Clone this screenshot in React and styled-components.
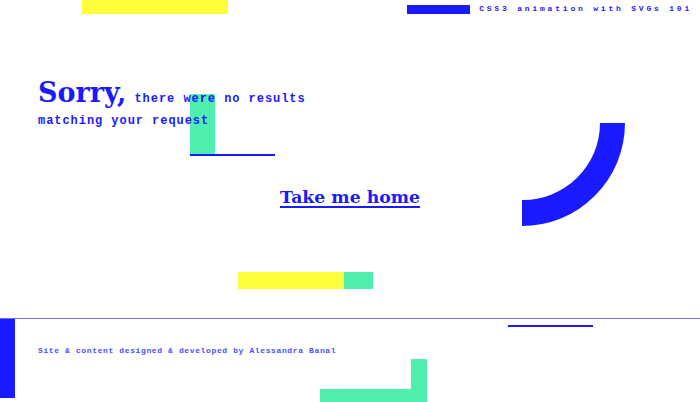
import React from 'react';
import styled, { createGlobalStyle } from 'styled-components';

const BLUE = '#1a1aff';
const GREEN = '#4ff0ad';
const YELLOW = '#fdfd3c';

const GlobalStyle = createGlobalStyle`
  *, *::before, *::after {
    box-sizing: border-box;
  }
  html, body {
    margin: 0;
    padding: 0;
    background: #fff;
  }
`;

const Page = styled.div`
  position: relative;
  width: 700px;
  height: 402px;
  overflow: hidden;
  background: #fff;
  display: flex;
  flex-direction: column;
`;

const Header = styled.header`
  display: flex;
  justify-content: flex-end;
  align-items: center;
  gap: 9px;
  padding: 4px 8px 0 0;
  height: 14px;
`;

const HeaderBar = styled.span`
  width: 63px;
  height: 9px;
  background: ${BLUE};
`;

const HeaderTitle = styled.span`
  font-family: "Liberation Mono", monospace;
  font-weight: bold;
  font-size: 8px;
  letter-spacing: 2.8px;
  color: ${BLUE};
  line-height: 10px;
`;

const Main = styled.main`
  flex: 1;
  padding-top: 68px;
`;

const Message = styled.p`
  margin: 0 0 0 38px;
  width: 290px;
  font-family: "Liberation Mono", monospace;
  font-weight: bold;
  font-size: 12px;
  letter-spacing: 0.95px;
  line-height: 22px;
  color: ${BLUE};
  position: relative;
  z-index: 2;
`;

const Sorry = styled.span`
  font-family: "DejaVu Serif", serif;
  font-weight: bold;
  font-size: 27px;
  letter-spacing: 0;
  margin-right: 8px;
`;

const HomeLink = styled.a`
  display: block;
  width: fit-content;
  margin: 55px auto 0;
  font-family: "DejaVu Serif", serif;
  font-weight: bold;
  font-size: 17.3px;
  color: ${BLUE};
  text-decoration: underline;
  text-decoration-thickness: 2px;
  text-underline-offset: 3px;
`;

const Footer = styled.footer`
  height: 84px;
  border-top: 1px solid #7070ff;
  padding: 27px 0 0 38px;
`;

const Credit = styled.p`
  margin: 0;
  font-family: "Liberation Mono", monospace;
  font-weight: bold;
  font-size: 8px;
  letter-spacing: 0.62px;
  color: #4d4dff;
`;

const Shape = styled.div`
  position: absolute;
  left: ${p => p.x}px;
  top: ${p => p.y}px;
  width: ${p => p.w}px;
  height: ${p => p.h}px;
  background: ${p => p.color};
  z-index: ${p => (p.front ? 3 : 1)};
`;

const Arc = styled.svg`
  position: absolute;
  left: 522px;
  top: 123px;
  z-index: 1;
`;

const shapes = [
  { x: 82, y: 0, w: 146, h: 14, color: YELLOW },
  { x: 190, y: 94, w: 25, h: 61, color: GREEN },
  { x: 190, y: 154, w: 85, h: 2, color: BLUE, front: true },
  { x: 238, y: 272, w: 106, h: 17, color: YELLOW },
  { x: 344, y: 272, w: 29, h: 17, color: GREEN },
  { x: 0, y: 319, w: 15, h: 79, color: BLUE },
  { x: 508, y: 325, w: 85, h: 2, color: BLUE },
  { x: 411, y: 359, w: 16, h: 43, color: GREEN },
  { x: 320, y: 389, w: 107, h: 13, color: GREEN },
];

export default function App() {
  return (
    <Page>
      <GlobalStyle />
      <Header>
        <HeaderBar />
        <HeaderTitle>CSS3 animation with SVGs 101</HeaderTitle>
      </Header>
      <Main>
        <Message>
          <Sorry>Sorry,</Sorry>there were no results matching your request
        </Message>
        <HomeLink href="#">Take me home</HomeLink>
      </Main>
      <Footer>
        <Credit>Site &amp; content designed &amp; developed by Alessandra Banal</Credit>
      </Footer>

      {shapes.map((s, i) => (
        <Shape key={i} {...s} />
      ))}
      <Arc width="104" height="104" viewBox="0 0 104 104">
        <path d="M 78 0 L 103 0 A 103 103 0 0 1 0 103 L 0 77 A 77 77 0 0 0 78 0 Z" fill={BLUE} />
      </Arc>
    </Page>
  );
}
